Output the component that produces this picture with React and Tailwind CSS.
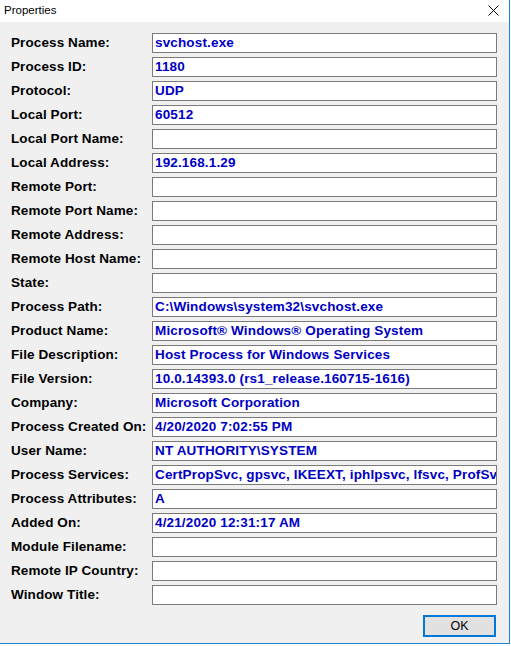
import { useState } from 'react'

const rows = [
  ['Process Name:', 'svchost.exe'],
  ['Process ID:', '1180'],
  ['Protocol:', 'UDP'],
  ['Local Port:', '60512'],
  ['Local Port Name:', ''],
  ['Local Address:', '192.168.1.29'],
  ['Remote Port:', ''],
  ['Remote Port Name:', ''],
  ['Remote Address:', ''],
  ['Remote Host Name:', ''],
  ['State:', ''],
  ['Process Path:', 'C:\\Windows\\system32\\svchost.exe'],
  ['Product Name:', 'Microsoft® Windows® Operating System'],
  ['File Description:', 'Host Process for Windows Services'],
  ['File Version:', '10.0.14393.0 (rs1_release.160715-1616)'],
  ['Company:', 'Microsoft Corporation'],
  ['Process Created On:', '4/20/2020 7:02:55 PM'],
  ['User Name:', 'NT AUTHORITY\\SYSTEM'],
  ['Process Services:', 'CertPropSvc, gpsvc, IKEEXT, iphlpsvc, lfsvc, ProfSvc, Schedule, SENS, SessionEnv, ShellHWDetection, Themes, Winmgmt'],
  ['Process Attributes:', 'A'],
  ['Added On:', '4/21/2020 12:31:17 AM'],
  ['Module Filename:', ''],
  ['Remote IP Country:', ''],
  ['Window Title:', ''],
]

function App() {
  const [open, setOpen] = useState(true)

  return (
    <div className="w-[511px] h-[646px] bg-white font-['Liberation_Sans',Arial,sans-serif]">
      <div className="w-[510px] h-[644px] border-r border-b border-[#1883d7] bg-[#f0f0f0] flex flex-col">
        {/* title bar */}
        <div className="h-[22px] bg-white flex items-center justify-between pl-[4px] pr-[10px]">
          <span className="text-[11.5px] text-black">Properties</span>
          <svg width="11" height="11" viewBox="0 0 11 11" className="mb-[2px]">
            <path d="M0.5 0.5 L10.5 10.5 M10.5 0.5 L0.5 10.5" stroke="#000" strokeWidth="1" />
          </svg>
        </div>

        <div className="pt-[11px] flex flex-col gap-[4px]">
          {rows.map(([label, value]) => (
            <div key={label} className="flex items-center h-[20px]">
              <div className="w-[152px] pl-[11px] text-[13.5px] tracking-[0.1px] font-bold text-black leading-none">
                {label}
              </div>
              <div className="w-[345px] h-[20px] border border-[#7a7a7a] bg-white overflow-hidden whitespace-nowrap pl-[2px] text-[13.5px] tracking-[0.15px] font-bold text-[#0000c4] leading-[18px]">
                {value}
              </div>
            </div>
          ))}
        </div>

        <div className="flex justify-end pr-[13px] mt-[10px]">
          <button
            type="button"
            onClick={() => setOpen(!open)}
            className="w-[73px] h-[22px] border-2 border-[#0078d7] bg-[#e1e1e1] text-[12.5px] text-black leading-none"
          >
            OK
          </button>
        </div>
      </div>
    </div>
  )
}

export default App
